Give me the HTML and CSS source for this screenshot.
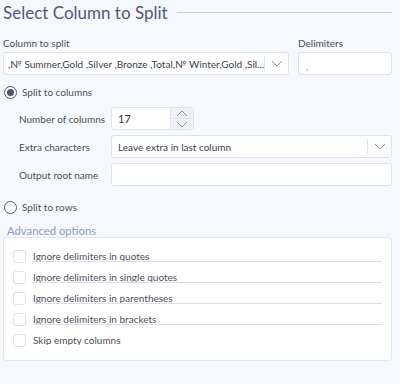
FILE: index.html
```html
<!DOCTYPE html>
<html lang="en">
<head>
    <meta charset="UTF-8">
    <title>Select Column to Split</title>
    <link rel="stylesheet" href="styles.css">
</head>
<body>
    <div class="panel">
        <!-- 標題 -->
        <div class="title-row">
            <h1>Select Column to Split</h1>
            <div class="title-line"></div>
        </div>

        <!-- 欄位與分隔符號 -->
        <div class="top-row">
            <div class="field">
                <label>Column to split</label>
                <div class="select">
                    <span class="select-text">,№ Summer,Gold ,Silver ,Bronze ,Total,№ Winter,Gold ,Sil...</span>
                    <span class="select-arrow">
                        <svg width="12" height="7" viewBox="0 0 12 7"><polyline points="1,1 6,6 11,1" fill="none" stroke="#8b93ad" stroke-width="1"/></svg>
                    </span>
                </div>
            </div>
            <div class="field">
                <label>Delimiters</label>
                <div class="input delim">,</div>
            </div>
        </div>

        <div class="radio-row">
            <span class="radio checked"></span>
            <span>Split to columns</span>
        </div>

        <div class="options">
            <label>Number of columns</label>
            <div class="spin">
                <span class="spin-value">17</span>
                <span class="spin-buttons">
                    <span class="spin-btn">
                        <svg width="12" height="7" viewBox="0 0 12 7"><polyline points="1,6 6,1 11,6" fill="none" stroke="#8b93ad" stroke-width="1"/></svg>
                    </span>
                    <span class="spin-btn">
                        <svg width="12" height="7" viewBox="0 0 12 7"><polyline points="1,1 6,6 11,1" fill="none" stroke="#8b93ad" stroke-width="1"/></svg>
                    </span>
                </span>
            </div>

            <label>Extra characters</label>
            <div class="select">
                <span class="select-text">Leave extra in last column</span>
                <span class="select-arrow">
                    <svg width="12" height="7" viewBox="0 0 12 7"><polyline points="1,1 6,6 11,1" fill="none" stroke="#8b93ad" stroke-width="1"/></svg>
                </span>
            </div>

            <label>Output root name</label>
            <div class="input"></div>
        </div>

        <div class="radio-row rows">
            <span class="radio"></span>
            <span>Split to rows</span>
        </div>

        <!-- 進階選項 -->
        <div class="advanced-title">Advanced options</div>
        <div class="advanced">
            <div class="check-row"><span class="checkbox"></span><span class="check-text line">Ignore delimiters in quotes</span></div>
            <div class="check-row"><span class="checkbox"></span><span class="check-text line">Ignore delimiters in single quotes</span></div>
            <div class="check-row"><span class="checkbox"></span><span class="check-text line">Ignore delimiters in parentheses</span></div>
            <div class="check-row"><span class="checkbox"></span><span class="check-text line">Ignore delimiters in brackets</span></div>
            <div class="check-row"><span class="checkbox"></span><span class="check-text">Skip empty columns</span></div>
        </div>
    </div>
</body>
</html>
```

FILE: styles.css
```css
/* 基本樣式 */
body {
    margin: 0;
    background-color: #f5f8fd;
    font-family: Lato, "Noto Sans", sans-serif;
    font-size: 10px;
    color: #4d4f5c;
}

.panel {
    padding: 0 8px 0 3px;
}

.title-row {
    display: flex;
    align-items: center;
    height: 24px;
    gap: 9px;
}

.title-row h1 {
    margin: 0;
    font-size: 17px;
    font-weight: normal;
    color: #535879;
    white-space: nowrap;
}

.title-line {
    flex: 1;
    height: 1px;
    background-color: #c9cddc;
}

.top-row {
    display: grid;
    grid-template-columns: minmax(0, 1fr) 94px;
    gap: 9px;
    margin-top: 12px;
}

.field label {
    display: block;
    line-height: 14px;
    margin-bottom: 2px;
}

.input, .select, .spin {
    box-sizing: border-box;
    height: 23px;
    background-color: white;
    border: 1px solid #dde2ee;
    border-radius: 3px;
}

.delim {
    padding: 6px 0 0 7px;
    line-height: 14px;
    color: #8a7aa0;
}

.select {
    display: flex;
    align-items: center;
}

.select-text {
    flex: 1;
    min-width: 0;
    padding-left: 4px;
    white-space: nowrap;
    overflow: hidden;
    color: #40414c;
}

.select-arrow {
    display: flex;
    align-items: center;
    justify-content: center;
    width: 23px;
    height: 15px;
    border-left: 1px solid #dde2ee;
}

.radio-row {
    display: flex;
    align-items: center;
    gap: 5px;
    height: 16px;
    margin-top: 9px;
    padding-left: 1px;
}

.radio-row.rows {
    margin-top: 13px;
}

.radio {
    box-sizing: border-box;
    width: 13px;
    height: 13px;
    border: 1px solid #4f5470;
    border-radius: 50%;
    background-color: white;
    display: flex;
    align-items: center;
    justify-content: center;
}

.radio.checked::after {
    content: "";
    width: 7px;
    height: 7px;
    border-radius: 50%;
    background-color: #4f5470;
}

.options {
    display: grid;
    grid-template-columns: 92px minmax(0, 1fr);
    row-gap: 5px;
    align-items: center;
    margin-top: 7px;
    padding-left: 16px;
}

.options label {
    white-space: nowrap;
}

.options .select-text {
    padding-left: 6px;
}

.spin {
    display: flex;
    width: 83px;
    overflow: hidden;
}

.spin-value {
    flex: 1;
    padding-left: 6px;
    line-height: 21px;
    font-size: 11px;
    color: #2f303a;
}

.spin-buttons {
    display: flex;
    flex-direction: column;
    width: 22px;
    background-color: #eef1f8;
    border-left: 1px solid #dde2ee;
}

.spin-btn {
    flex: 1;
    display: flex;
    align-items: center;
    justify-content: center;
}

.spin-btn + .spin-btn {
    border-top: 1px solid #dde2ee;
}

.advanced-title {
    margin-top: 9px;
    padding-left: 4px;
    font-size: 11.3px;
    line-height: 13px;
    color: #8e9cc4;
}

.advanced {
    box-sizing: border-box;
    height: 124px;
    padding: 12px 9px 0 9px;
    background-color: white;
    border: 1px solid #e3e7f0;
    border-radius: 3px;
}

.check-row {
    display: flex;
    align-items: flex-start;
    gap: 7px;
    height: 21px;
}

.checkbox {
    box-sizing: border-box;
    width: 13px;
    height: 13px;
    border: 1px solid #dde2ee;
    border-radius: 3px;
    flex-shrink: 0;
}

.check-text {
    line-height: 12px;
    height: 11px;
    overflow: hidden;
}

.check-text.line {
    flex: 1;
    border-bottom: 1px solid #d8deeb;
}
```
